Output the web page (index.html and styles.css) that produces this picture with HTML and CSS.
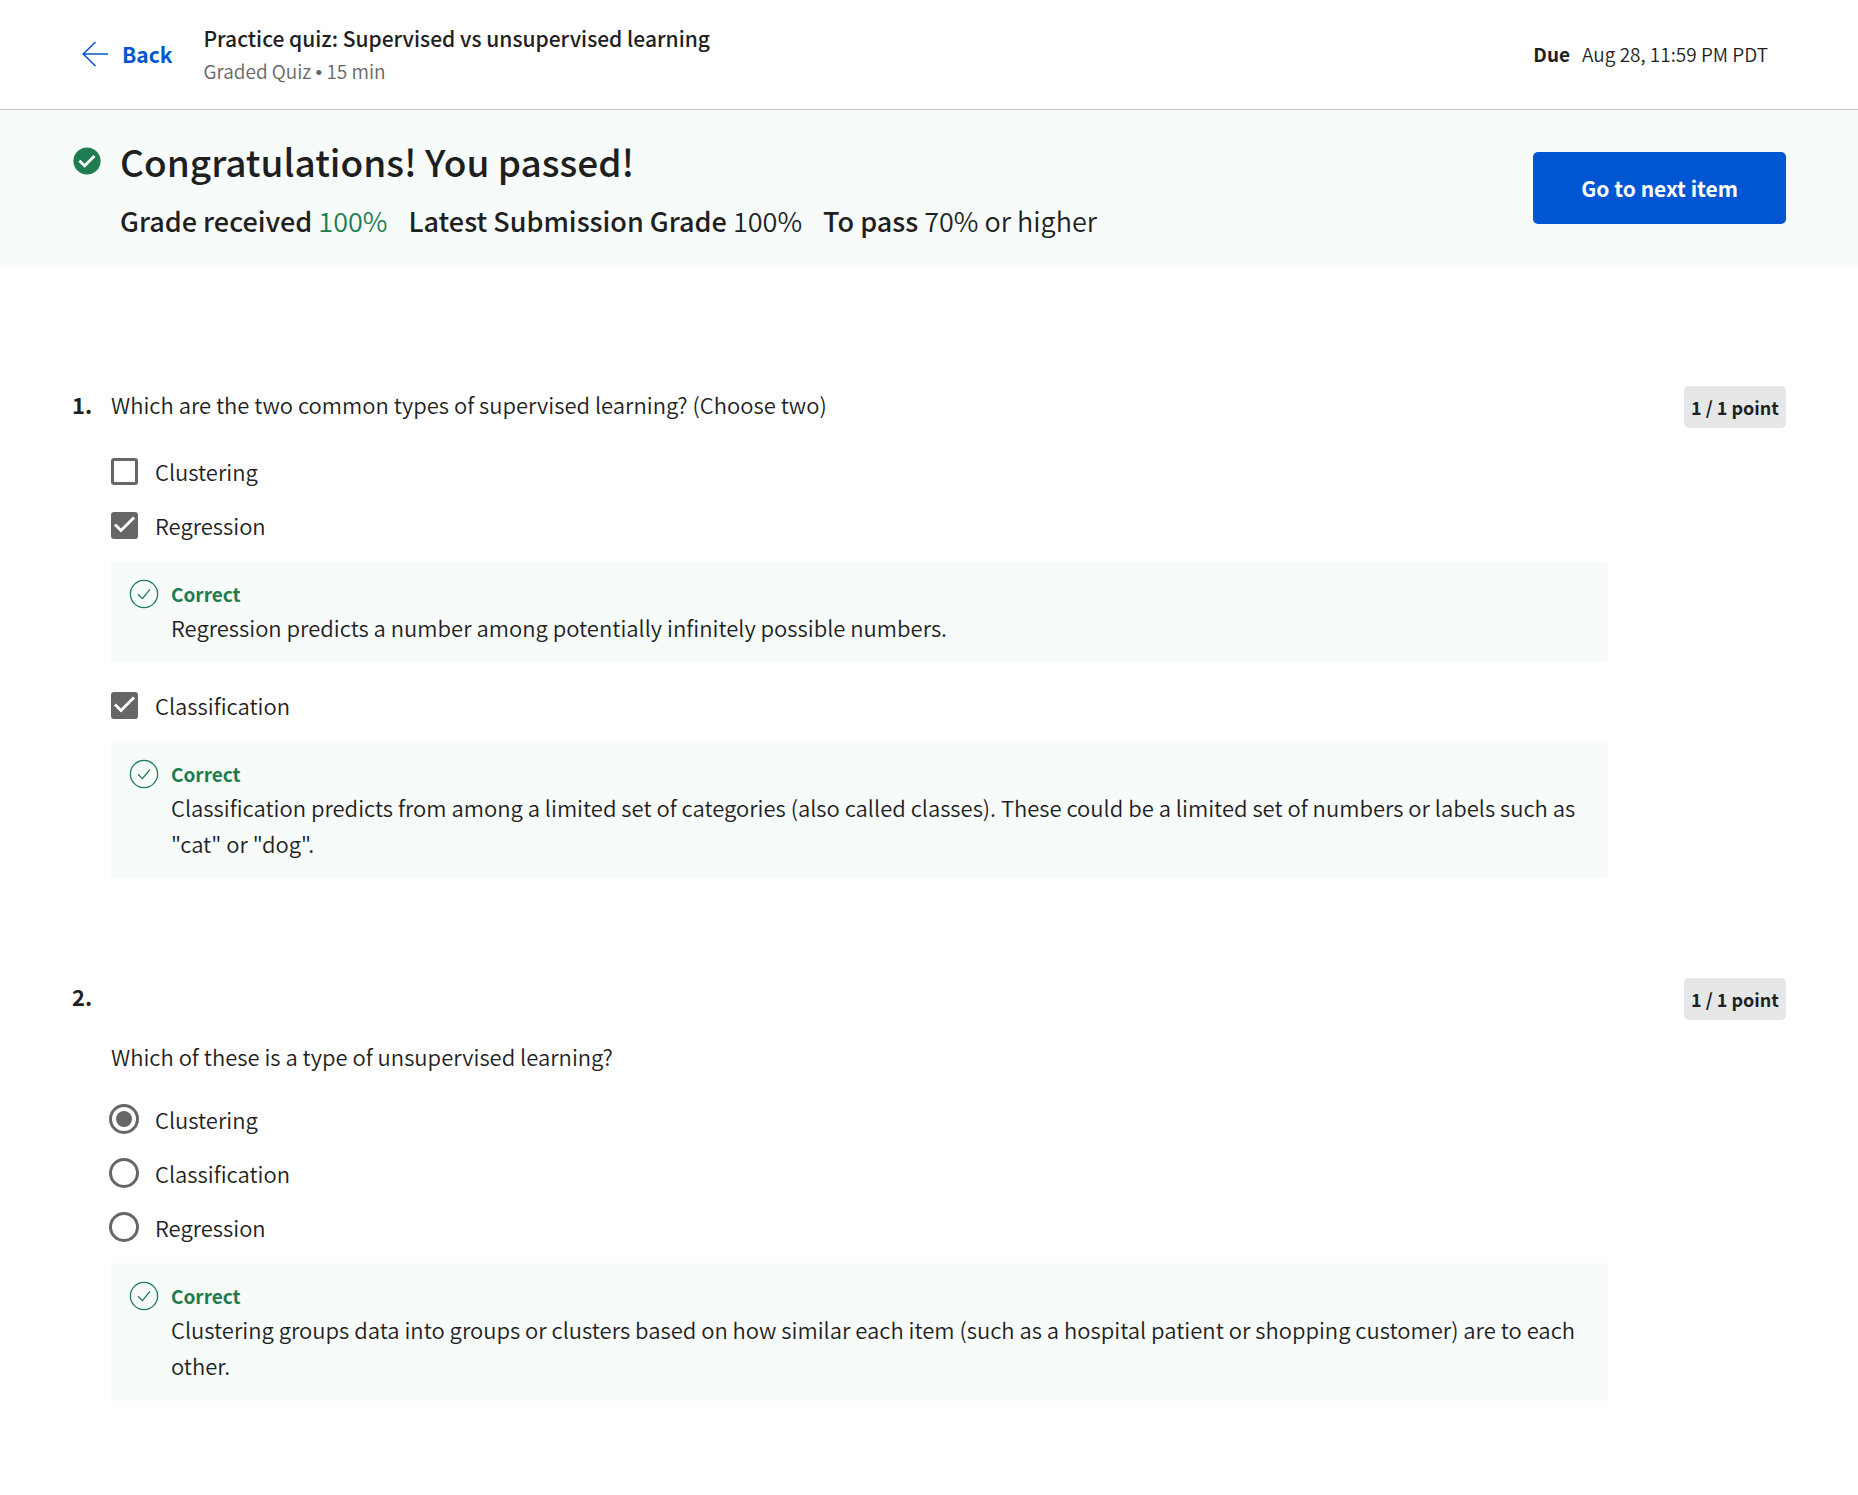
FILE: index.html
```html
<!DOCTYPE html>
<html lang="en">
<head>
  <meta charset="utf-8">
  <meta name="viewport" content="width=device-width, initial-scale=1">
  <title>Practice quiz: Supervised vs unsupervised learning</title>
  <link rel="stylesheet" href="styles.css">
</head>
<body>
  <svg class="sprite" aria-hidden="true">
    <symbol id="circle-check" viewBox="0 0 30 30">
      <circle cx="15" cy="15" r="13.6" fill="none" stroke="currentColor" stroke-width="1.3"/>
      <path d="M9 15.2 13.4 19.6 21 10.4" fill="none" stroke="currentColor" stroke-width="1.3"/>
    </symbol>
  </svg>

  <header class="topbar">
    <a class="back" href="#">
      <svg class="back-icon" viewBox="0 0 26 26" aria-hidden="true">
        <path d="M13.5 1 1.2 13 13.5 25M1.2 13H26" fill="none" stroke="currentColor" stroke-width="1.5"/>
      </svg>
      Back
    </a>
    <div class="heading">
      <h1 class="quiz-title">Practice quiz: Supervised vs unsupervised learning</h1>
      <p class="quiz-meta">Graded Quiz <span class="dot">•</span> 15 min</p>
    </div>
    <p class="due"><strong>Due</strong><span>Aug 28, 11:59 PM PDT</span></p>
  </header>

  <section class="banner">
    <svg class="banner-icon" viewBox="0 0 28 28" aria-hidden="true">
      <circle cx="14" cy="14" r="13.6" fill="#1d7c50"/>
      <path d="M6.4 13.8 11.6 18.8 21.4 9" fill="none" stroke="#fff" stroke-width="2.8"/>
    </svg>
    <div class="result">
      <h2 class="result-title">Congratulations! You passed!</h2>
      <ul class="grades">
        <li><strong>Grade received</strong> <span class="passed">100%</span></li>
        <li><strong>Latest Submission Grade</strong> 100%</li>
        <li><strong>To pass</strong> 70% or higher</li>
      </ul>
    </div>
    <button class="next" type="button">Go to next item</button>
  </section>

  <main class="questions">
    <section class="question">
      <span class="number">1.</span>
      <fieldset class="content">
        <legend class="prompt">Which are the two common types of supervised learning? (Choose two)</legend>
        <label class="option"><input class="checkbox" type="checkbox"> Clustering</label>
        <label class="option"><input class="checkbox" type="checkbox" checked> Regression</label>
        <div class="feedback">
          <svg class="feedback-icon" aria-hidden="true"><use href="#circle-check"/></svg>
          <div>
            <p class="verdict">Correct</p>
            <p>Regression predicts a number among potentially infinitely possible numbers.</p>
          </div>
        </div>
        <label class="option"><input class="checkbox" type="checkbox" checked> Classification</label>
        <div class="feedback">
          <svg class="feedback-icon" aria-hidden="true"><use href="#circle-check"/></svg>
          <div>
            <p class="verdict">Correct</p>
            <p>Classification predicts from among a limited set of categories (also called classes). These could be a limited set of numbers or labels such as "cat" or "dog".</p>
          </div>
        </div>
      </fieldset>
      <span class="points">1 / 1 point</span>
    </section>

    <section class="question">
      <span class="number">2.</span>
      <fieldset class="content content-lowered">
        <legend class="prompt">Which of these is a type of unsupervised learning?</legend>
        <label class="option"><input class="radio" type="radio" name="q2" checked> Clustering</label>
        <label class="option"><input class="radio" type="radio" name="q2"> Classification</label>
        <label class="option"><input class="radio" type="radio" name="q2"> Regression</label>
        <div class="feedback">
          <svg class="feedback-icon" aria-hidden="true"><use href="#circle-check"/></svg>
          <div>
            <p class="verdict">Correct</p>
            <p>Clustering groups data into groups or clusters based on how similar each item (such as a hospital patient or shopping customer) are to each other.</p>
          </div>
        </div>
      </fieldset>
      <span class="points">1 / 1 point</span>
    </section>
  </main>
</body>
</html>
```

FILE: styles.css
```css
* {
  box-sizing: border-box;
}

body {
  margin: 0;
  background: #fff;
  color: #1f1f1f;
  font-family: "Source Sans Pro", "Noto Sans CJK SC", "Noto Sans", sans-serif;
  font-size: 22px;
  font-weight: 350;
  line-height: 36px;
}

h1, h2, p, ul {
  margin: 0;
  padding: 0;
}

.sprite {
  display: none;
}

/* Top bar */
.topbar {
  display: flex;
  align-items: center;
  min-height: 110px;
  padding: 0 90px 2px 82px;
  border-bottom: 1px solid #c1c1c1;
}

.back {
  display: flex;
  align-items: center;
  gap: 14px;
  margin-right: 31px;
  color: #0056d2;
  font-size: 21px;
  font-weight: 700;
  text-decoration: none;
}

.back-icon {
  width: 26px;
  height: 26px;
}

.heading {
  flex: 1;
  padding-bottom: 2px;
}

.quiz-title {
  font-size: 21px;
  font-weight: 500;
  line-height: 36px;
}

.quiz-meta {
  color: #666;
  font-size: 19px;
  line-height: 30px;
}

.dot {
  font-family: "Liberation Sans", sans-serif;
  line-height: 1;
}

.due {
  display: flex;
  gap: 12px;
  font-size: 19px;
}

/* Result banner */
.banner {
  display: flex;
  align-items: center;
  min-height: 156px;
  padding: 0 72px;
  background: #f7fbf9;
}

.banner-icon {
  flex: none;
  align-self: flex-start;
  width: 28px;
  height: 28px;
  margin: 37px 19px 0 1px;
}

.result {
  flex: 1;
  padding-top: 5px;
}

.result-title {
  font-size: 37px;
  font-weight: 500;
  line-height: 60px;
}

.grades {
  display: flex;
  flex-wrap: wrap;
  column-gap: 21px;
  font-size: 27px;
  line-height: 60px;
  list-style: none;
}

.grades strong {
  font-weight: 500;
}

.passed {
  color: #1d7c50;
}

.next {
  height: 72px;
  padding: 0 48px;
  border: 0;
  border-radius: 5px;
  background: #0056d2;
  color: #fff;
  font: inherit;
  font-size: 21px;
  font-weight: 700;
}

/* Questions */
.questions {
  display: grid;
  gap: 84px;
  padding: 120px 72px 80px;
}

.question {
  display: grid;
  grid-template-columns: 39px 1fr 102px;
  align-items: start;
}

.number {
  font-weight: 700;
}

.content {
  min-width: 0;
  margin: 0 76px 0 0;
  padding: 0;
  border: 0;
}

.content-lowered {
  margin-top: 60px;
}

.prompt {
  padding: 0;
  margin-bottom: 22px;
}

.content-lowered .prompt {
  margin-bottom: 18px;
}

.points {
  padding: 3px 0;
  border-radius: 5px;
  background: #e5e7e8;
  font-size: 18px;
  font-weight: 700;
  text-align: center;
}

.option {
  display: flex;
  align-items: center;
  gap: 17px;
  height: 54px;
}

.checkbox,
.radio {
  display: grid;
  flex: none;
  place-items: center;
  width: 27px;
  height: 27px;
  margin: 0;
  border: 3px solid #666;
  appearance: none;
}

.checkbox {
  border-radius: 3px;
}

.checkbox:checked {
  background: #666;
}

.checkbox:checked::before {
  content: "";
  width: 27px;
  height: 27px;
  margin: -3px;
  background: #fff;
  clip-path: polygon(10px 21px, 3px 14px, 5px 12px, 10px 17px, 22px 5px, 24px 7px);
}

.radio {
  width: 30px;
  height: 30px;
  margin: 0 -1px 0 -2px;
  border-radius: 50%;
}

.radio:checked::before {
  content: "";
  width: 16px;
  height: 16px;
  border-radius: 50%;
  background: #666;
}

.feedback {
  display: flex;
  gap: 12px;
  margin: 9px 0 15px;
  padding: 18px 12px 18px 18px;
  background: #f7fbf9;
}

.feedback-icon {
  flex: none;
  width: 30px;
  height: 30px;
  color: #1d7c50;
}

.verdict {
  color: #1d7c50;
  font-size: 19px;
  font-weight: 700;
  line-height: 30px;
}
```
